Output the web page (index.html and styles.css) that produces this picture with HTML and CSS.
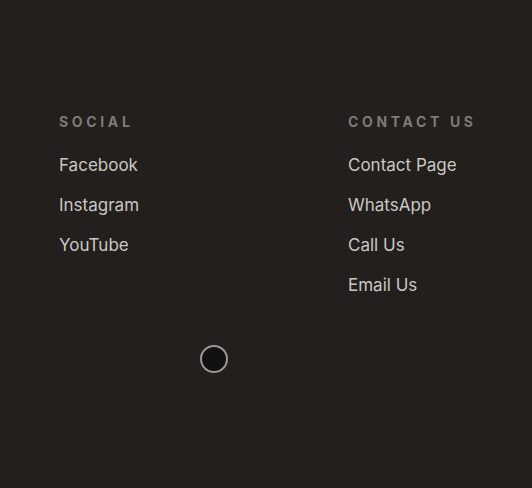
FILE: index.html
```html
<!DOCTYPE html>
<html>
  <head>
    <link rel="stylesheet" href="styles.css">
  </head>
  <body>
    <footer class="footer">
      <div class="footer-cols">
        <div class="footer-col">
          <h4 class="footer-title">Social</h4>
          <a href="#">Facebook</a>
          <a href="#">Instagram</a>
          <a href="#">YouTube</a>
        </div>
        <div class="footer-col">
          <h4 class="footer-title">Contact Us</h4>
          <a href="#">Contact Page</a>
          <a href="#">WhatsApp</a>
          <a href="#">Call Us</a>
          <a href="#">Email Us</a>
        </div>
      </div>
      <div class="footer-bottom">
        <span class="dot"></span>
      </div>
    </footer>
  </body>
</html>
```

FILE: styles.css
```css
body {
  margin: 0;
  padding: 0;
  background-color: #221f1d;
  font-family: Inter, "Noto Sans", sans-serif;
  height: 488px;
  overflow: hidden;
}

.footer {
  padding: 112px 0 0 59px;
}

.footer-cols {
  display: flex;
}

.footer-col {
  display: flex;
  flex-direction: column;
  flex: 1;
}

.footer-col:first-child {
  flex: 0 0 289px;
}

.footer-title {
  margin: 0 0 13px;
  color: #7d7a77;
  font-size: 14px;
  font-weight: 700;
  letter-spacing: 0.26em;
  text-transform: uppercase;
  line-height: 20px;
}

.footer-col a {
  color: #cbc7c2;
  text-decoration: none;
  font-size: 17px;
  line-height: 24px;
  padding: 8px 0;
}

.footer-bottom {
  margin-top: 40px;
  padding-left: 141px;
}

.dot {
  display: block;
  width: 24px;
  height: 24px;
  border: 2px solid #9a9794;
  border-radius: 50%;
  background-color: #131110;
}
```
